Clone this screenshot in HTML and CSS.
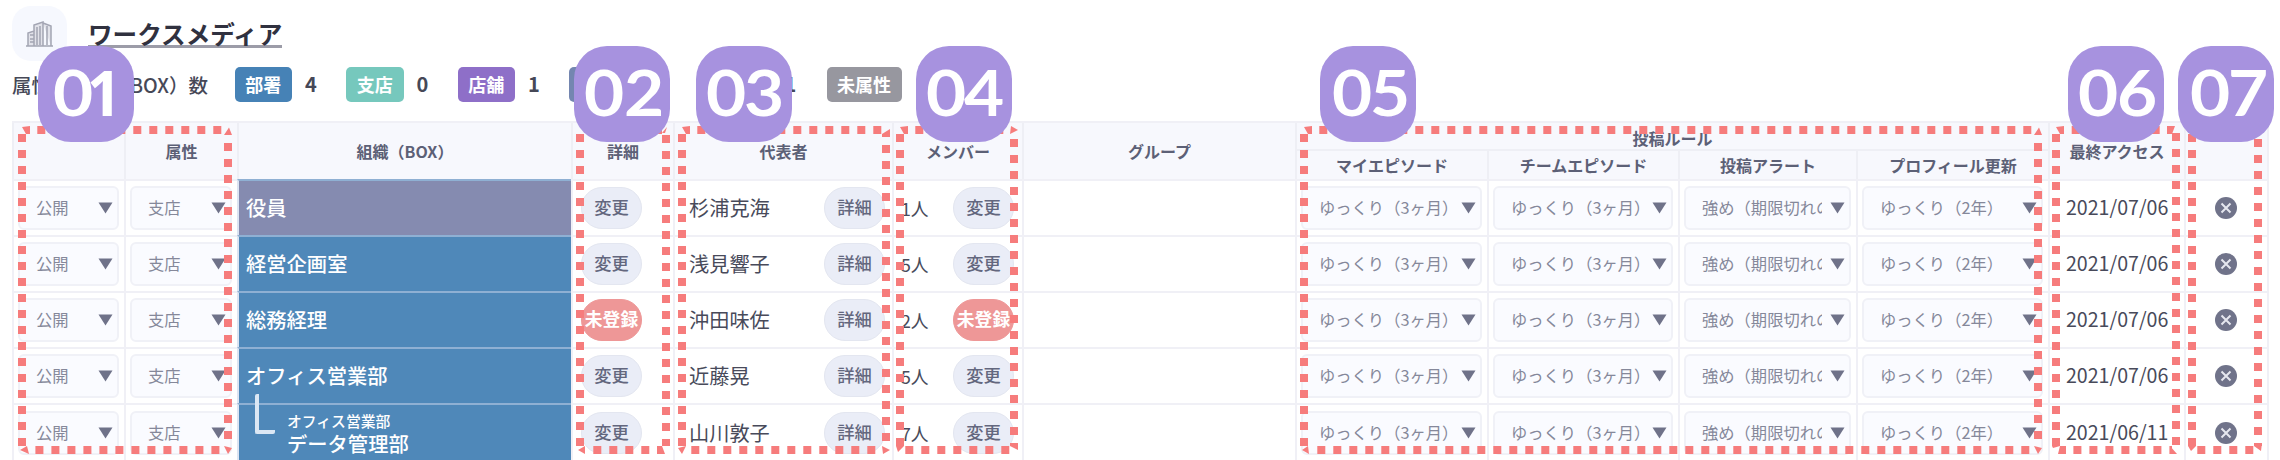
FILE: index.html
```html
<!DOCTYPE html>
<html lang="ja">
<head>
<meta charset="utf-8">
<title>ワークスメディア</title>
<link rel="stylesheet" href="styles.css">
</head>
<body>
<div class="page" id="page"></div>
<script src="app.js"></script>
</body>
</html>
```
FILE: styles.css
```css
* { box-sizing: border-box; }
body { margin: 0; background: #fff; font-family: "Noto Sans CJK JP", sans-serif; }
.page { position: relative; width: 2280px; height: 460px; overflow: hidden; padding: 6px 0 0 12px; }
.title-row { display: flex; align-items: flex-start; height: 55px; }
.logo { display: flex; align-items: center; justify-content: center; width: 55px; height: 55px; border-radius: 19px; background: #f6f8fe; }
.logo svg { width: 27px; height: 26px; }
.title { margin: 0 0 0 21px; padding-top: 7px; font-size: 24.6px; font-weight: 700; color: #30313f; }
.title span { display: block; height: 35px; line-height: 40px; border-bottom: 3px solid #9c9ca8; }
.counts { display: flex; align-items: center; height: 46px; color: #464857; font-size: 19.5px; }
.counts-label { display: flex; justify-content: space-between; width: 196px; margin-right: 26.5px; font-weight: 500; }
.tag { flex: none; width: 57.5px; height: 35px; line-height: 34px; border-radius: 5px; color: #fff; font-size: 18px; font-weight: 700; text-align: center; }
.tag.dept { background: #4682b6; }
.tag.branch { background: #76c8bd; }
.tag.shop { background: #8e6fc8; }
.tag.exec { background: #7486b0; }
.tag.none { background: #97979f; width: 75px; }
.num { width: 54px; padding-left: 13px; font-size: 20px; font-weight: 700; line-height: 34px; }
.num.last { width: 200px; padding-left: 158px; }
.grid { display: grid; grid-template-columns: 112px 113px 334px 102px 219px 130px 273px 192px 191px 178px 192px 136px 85px; width: 2257px; border-right: 2px solid #f0f0f6; }
.head { margin-top: 14px; grid-template-rows: 28px 28px; background: #f7f8fd; border-top: 2px solid #f0f0f6; color: #5c6076; font-size: 16px; font-weight: 700; line-height: 22px; }
.head > div { display: flex; align-items: center; justify-content: center; border-left: 2px solid #eeeff5; }
.head > .tall { grid-row: 1 / 3; }
.head > .rule { grid-row: 1; grid-column: 8 / 12; padding-top: 3px; border-bottom: 2px solid #eeeff5; }
.head > .sub { grid-row: 2; padding-bottom: 1px; }
.row { height: 56px; grid-template-rows: 56px; }
.row.tree { height: 59px; grid-template-rows: 59px; }
.cell { display: flex; align-items: center; min-width: 0; padding-bottom: 1px; border-left: 2px solid #f0f0f6; border-top: 2px solid #f0f0f6; color: #484a5a; }
.tree .cell { padding-bottom: 2px; }
.select { display: flex; align-items: center; justify-content: space-between; flex: 1; min-width: 0; height: 44px; margin: 0 5px 0 4px; padding: 0 4px 0 16px; border: 2px solid #f0f1f7; border-radius: 6px; background: #fafbff; color: #85889a; font-size: 16.3px; }
.select span { overflow: hidden; white-space: nowrap; line-height: 26px; padding-bottom: 1px; }
.select.clip span { width: 120px; }
.select svg { width: 15px; height: 12px; flex: none; }
.org { padding-left: 7px; border-left-color: #dce4f2; border-top-color: #8fb0d3; background: #4f88b9; color: #fff; font-size: 20.3px; font-weight: 500; padding-bottom: 3px; }
.org.exec { background: #858bb0; }
.tree .org.child { position: relative; padding: 0 0 3px 48px; line-height: 23px; }
.org.child small { display: block; font-size: 14.8px; }
.branch-line { position: absolute; left: 16px; top: -11px; width: 20px; height: 40px; border: solid #dbe7f4; border-width: 0 0 4px 4px; border-radius: 2px; }
.pill { flex: none; width: 61px; height: 42px; line-height: 37px; border: 1px solid #e3e6f0; border-radius: 21px; background: #eaedf7; color: #63677e; font-size: 17.3px; font-weight: 500; text-align: center; white-space: nowrap; }
.pill.alert { border-color: #ee9797; background: #ee9797; color: #fff; font-size: 17.8px; font-weight: 700; }
.detail { padding-left: 8px; }
.person { justify-content: space-between; padding-left: 14px; padding-right: 7px; font-size: 20.2px; }
.member { justify-content: space-between; padding-left: 7px; padding-right: 8px; font-size: 17.8px; }
.date { padding-left: 16px; padding-bottom: 3px; font-size: 19.6px; }
.tree .date { padding-bottom: 5px; }
.close { justify-content: center; padding-right: 4px; padding-bottom: 0; }
.close svg { width: 22px; height: 22px; }
.frames { position: absolute; left: 0; top: 0; width: 2280px; height: 460px; }
.frames line { stroke: #f67c7c; stroke-width: 8; stroke-dasharray: 8 8; }
.frames path { fill: #f67c7c; }
.badge { position: absolute; top: 46px; width: 96px; height: 96px; border-radius: 33px; background: #a792df; color: #fff; font: 700 63px/92px Lato, sans-serif; }
.badge span { position: absolute; top: 0; width: 42px; text-align: center; transform: scaleX(1.1); }
.badge .one { font-family: "Open Sans", sans-serif; transform: scaleX(.95); }
```
FILE: app.js
```js
const arrow = '<svg viewBox="0 0 15 12"><path d="M.5 .5h14L7.5 11.5z" fill="#6f7289"/></svg>';
const select = (text, clip) => `<div class="cell"><div class="select${clip ? ' clip' : ''}"><span>${text}</span>${arrow}</div></div>`;
const pill = (text) => `<div class="pill${text === '未登録' ? ' alert' : ''}">${text}</div>`;
const rows = [
  ['役員', '変更', '杉浦克海', '1人', '変更', '2021/07/06', 'exec'],
  ['経営企画室', '変更', '浅見響子', '5人', '変更', '2021/07/06', ''],
  ['総務経理', '未登録', '沖田味佐', '2人', '未登録', '2021/07/06', ''],
  ['オフィス営業部', '変更', '近藤晃', '5人', '変更', '2021/07/06', ''],
  ['<div><small>オフィス営業部</small>データ管理部</div><i class="branch-line"></i>', '変更', '山川敦子', '7人', '変更', '2021/06/11', 'child'],
];
const rowHtml = ([org, state, name, count, action, date, kind]) => `
<div class="grid row${kind === 'child' ? ' tree' : ''}">
${select('公開')}${select('支店')}
<div class="cell org ${kind}">${org}</div>
<div class="cell detail">${pill(state)}</div>
<div class="cell person"><span>${name}</span>${pill('詳細')}</div>
<div class="cell member"><span>${count}</span>${pill(action)}</div>
<div class="cell"></div>
${select('ゆっくり（3ヶ月）')}${select('ゆっくり（3ヶ月）')}${select('強め（期限切れの', true)}${select('ゆっくり（2年）')}
<div class="cell date">${date}</div>
<div class="cell close"><svg viewBox="0 0 22 22"><circle cx="11" cy="11" r="11" fill="#70738a"/><path d="M6.5 6.5l9 9M15.5 6.5l-9 9" stroke="#e6e7ef" stroke-width="2"/></svg></div>
</div>`;

// Each frame: left and right centre, first dash of top, right and bottom sides, corner pieces.
const frames = [
  [22, 228, 37.3, 143, 35.4, 'M22 127L30 126V134H26ZM224 135L229 127.5 232 135ZM224 446L232 448 228 454ZM20 450L27 446 29 454Z'],
  [580, 666, 594, 135, 593.3, 'M662 133L667 127 665 133ZM578 450L585 446V454ZM657 446H662L665 454H657Z'],
  [682, 886, 697.3, 145, 691.3, 'M682 127L690 126V134H686ZM882 134L890 129V137H882ZM882 446L890 450 883 454ZM678 448L686 446 682 454Z'],
  [900, 1014, 915.3, 139, 905.3, 'M900 127L908 126V134H904ZM1011 126L1018 130 1010 134ZM896 446H904L898 452ZM1010 446L1018 444V450Z'],
  [1304, 2038, 1319.3, 143, 1317.3, 'M1304 127L1312 126V134H1308ZM2034 135L2039 127.5 2042 135ZM2034 446L2042 448 2038 454ZM1302 450L1308 446 1309 454Z'],
  [2056, 2176, 2071.7, 133, 2073.4, 'M2056 127L2064 126V134H2060ZM2167 126H2175L2172 134H2167ZM2052 446H2060L2053 448ZM2060 446H2066V454H2058ZM2170 446L2177 454H2171Z'],
  [2192, 2258, 2207, 139, 2197.3, 'M2188 446H2196L2191 451ZM2254 446L2262 443 2261 451Z'],
];
const line = (x1, y1, x2, y2) => `<line x1="${x1}" y1="${y1}" x2="${x2}" y2="${y2}"/>`;
const frameHtml = ([l, r, top, right, bottom, corners]) =>
  line(l, 134, l, 446) + line(top, 130, r - 4, 130) + line(r, right, r, 446) + line(bottom, 450, r - 4, 450) + `<path d="${corners}"/>`;

// Badge left edge, digit, centre of the zero and centre of the digit.
const badges = [[38, 1, 35, 66], [574, 2, 29.5, 70], [696, 3, 29.5, 68], [916, 4, 29.5, 68], [1320, 5, 31.5, 70], [2068, 6, 29.5, 69], [2178, 7, 31.5, 69.5]];
const badgeHtml = ([x, n, zero, digit]) =>
  `<div class="badge" style="left:${x}px"><span style="left:${zero - 21}px">0</span><span${n === 1 ? ' class="one"' : ''} style="left:${digit - 21}px">${n}</span></div>`;

document.getElementById('page').innerHTML = `
<div class="title-row">
<div class="logo"><svg viewBox="0 0 27 26" fill="none" stroke="#a3a5b3" stroke-width="1.5"><path d="M0 25H27M2 25V12l6-2V25M8 25V4l9-3V25M17 2l8 3V25" fill="#e1e2e9"/><path d="M11 6V24M14 5V24M4 14H8M4 18H8M4 21H8M21 5V24"/></svg></div>
<h1 class="title"><span>ワークスメディア</span></h1>
</div>
<div class="counts">
<div class="counts-label"><span>属性</span><span>（BOX）数</span></div>
<div class="tag dept">部署</div><div class="num">4</div>
<div class="tag branch">支店</div><div class="num">0</div>
<div class="tag shop">店舗</div><div class="num">1</div>
<div class="tag exec"></div><div class="num last">1</div>
<div class="tag none">未属性</div>
</div>
<div class="grid head">
<div class="tall"></div><div class="tall">属性</div><div class="tall">組織（BOX）</div><div class="tall">詳細</div><div class="tall">代表者</div><div class="tall">メンバー</div><div class="tall">グループ</div>
<div class="rule">投稿ルール</div><div class="tall" style="grid-column:12">最終アクセス</div><div class="tall" style="grid-column:13"></div>
<div class="sub" style="grid-column:8">マイエピソード</div><div class="sub" style="grid-column:9">チームエピソード</div><div class="sub" style="grid-column:10">投稿アラート</div><div class="sub" style="grid-column:11">プロフィール更新</div>
</div>
${rows.map(rowHtml).join('')}
<svg class="frames" viewBox="0 0 2280 460">${frames.map(frameHtml).join('')}</svg>
${badges.map(badgeHtml).join('')}`;
```
